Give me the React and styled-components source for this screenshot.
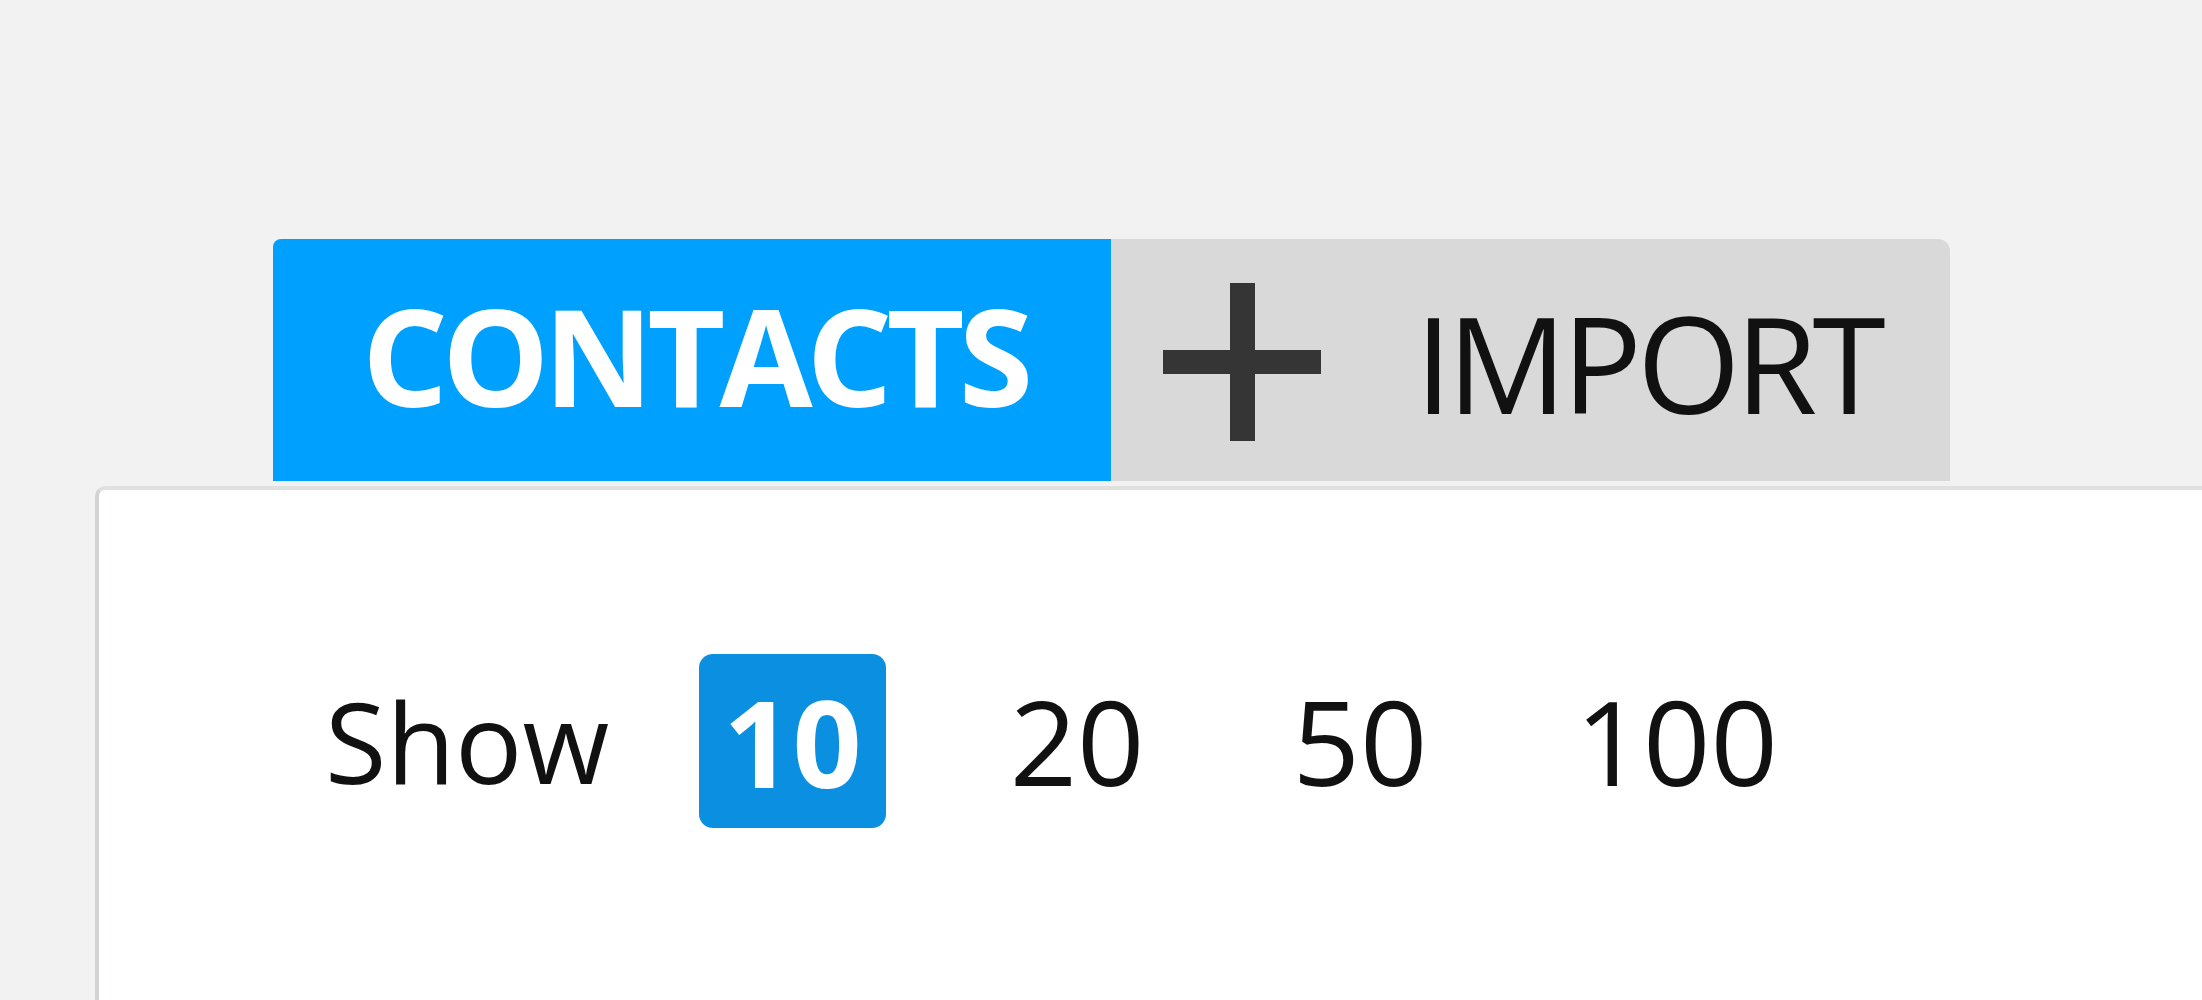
import React from 'react';
import styled, { createGlobalStyle } from 'styled-components';

const GlobalStyle = createGlobalStyle`
  html, body {
    margin: 0;
    padding: 0;
    background: #f2f2f2;
    font-family: "Open Sans", "Noto Sans", sans-serif;
    color: #111;
  }
`;

const Page = styled.div`
  min-height: 100vh;
  display: flex;
  flex-direction: column;
  padding-top: 239px;
  box-sizing: border-box;
`;

const Tabs = styled.div`
  display: flex;
  align-items: stretch;
  margin-left: 273px;
  height: 242px;
`;

const Tab = styled.div`
  display: flex;
  align-items: center;
  box-sizing: border-box;
  background: ${p => (p.$active ? '#00a0fe' : '#d9d9d9')};
  color: ${p => (p.$active ? '#fff' : '#111')};
  border-radius: ${p => (p.$active ? '8px 0 0 0' : '0 12px 0 0')};
  padding: ${p => (p.$active ? '0 84px 0 89px' : '0 69px 0 52px')};
  gap: 94px;
`;

const TabLabel = styled.span`
  font-size: ${p => (p.$bold ? '135px' : '133px')};
  font-weight: ${p => (p.$bold ? 700 : 400)};
  letter-spacing: ${p => (p.$bold ? '-6px' : '-5px')};
  line-height: 1;
  margin-top: ${p => (p.$bold ? '-10px' : '4px')};
`;

const PlusIcon = styled.svg`
  width: 158px;
  height: 158px;
  flex: none;
  margin-top: 4px;
`;

const Panel = styled.div`
  flex: 1;
  margin-top: 5px;
  margin-left: 95px;
  background: #fff;
  border-left: 4px solid #d2d4d4;
  border-top: 4px solid #dfe1e1;
  border-top-left-radius: 10px;
  padding: 164px 0 0 226px;
  box-sizing: border-box;
`;

const ShowRow = styled.div`
  display: flex;
  align-items: center;
  gap: 100px;
`;

const ShowLabel = styled.span`
  font-size: 112px;
  line-height: 1;
  margin-right: -10px;
`;

const PageSize = styled.span`
  display: flex;
  align-items: center;
  justify-content: center;
  box-sizing: border-box;
  height: 174px;
  padding: 0 24px;
  border-radius: 14px;
  line-height: 1;
  font-size: ${p => (p.$active ? '121px' : '118px')};
  font-weight: ${p => (p.$active ? 700 : 400)};
  background: ${p => (p.$active ? '#0b8fe1' : 'transparent')};
  color: ${p => (p.$active ? '#fff' : '#111')};
`;

const sizes = [10, 20, 50, 100];

export default function App() {
  return (
    <>
      <GlobalStyle />
      <Page>
        <Tabs>
          <Tab $active>
            <TabLabel $bold>CONTACTS</TabLabel>
          </Tab>
          <Tab>
            <PlusIcon viewBox="0 0 158 158">
              <rect x="67" y="0" width="25" height="158" fill="#353535" />
              <rect x="0" y="67" width="158" height="24" fill="#353535" />
            </PlusIcon>
            <TabLabel>IMPORT</TabLabel>
          </Tab>
        </Tabs>
        <Panel>
          <ShowRow>
            <ShowLabel>Show</ShowLabel>
            {sizes.map(s => (
              <PageSize key={s} $active={s === 10}>{s}</PageSize>
            ))}
          </ShowRow>
        </Panel>
      </Page>
    </>
  );
}
